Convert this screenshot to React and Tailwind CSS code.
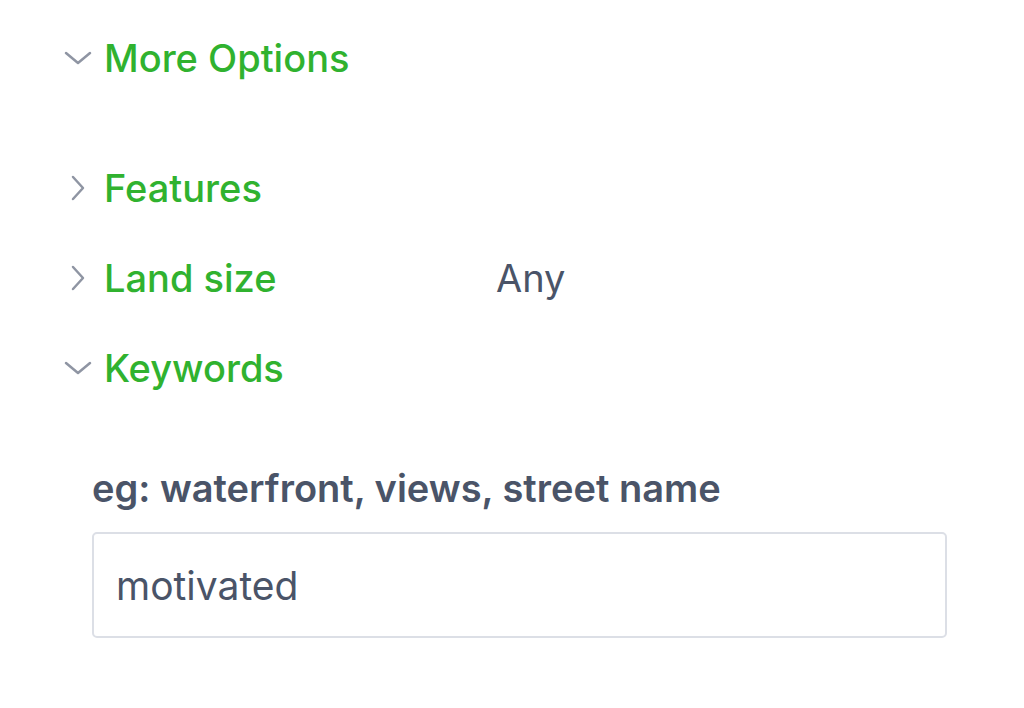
import { useState } from 'react';

const GREEN = 'text-[#30b22f]';

const ChevronDown = () => (
  <svg width="28" height="14" viewBox="0 0 28 14" fill="none" className="text-[#8f95a3]">
    <path d="M2 2l12 10L26 2" stroke="currentColor" strokeWidth="2.5" strokeLinecap="round" strokeLinejoin="round" />
  </svg>
);

const ChevronRight = () => (
  <svg width="16" height="26" viewBox="0 0 16 26" fill="none" className="text-[#8f95a3]">
    <path d="M3 2l10 11L3 24" stroke="currentColor" strokeWidth="2.5" strokeLinecap="round" strokeLinejoin="round" />
  </svg>
);

const Row = ({ open, label, value }) => (
  <div className="flex items-center h-[90px]">
    <div className={`w-[40px] flex items-center ${open ? 'justify-start' : 'justify-start pl-[6px]'}`}>
      {open ? <ChevronDown /> : <ChevronRight />}
    </div>
    <span className={`w-[392px] font-medium ${GREEN}`}>{label}</span>
    {value && <span className="text-[#4a5468]">{value}</span>}
  </div>
);

export default function App() {
  const [keywords, setKeywords] = useState('motivated');

  return (
    <div
      className="w-[1024px] h-[708px] bg-white pl-[64px] pt-[13px] text-[38px] leading-none"
      style={{ fontFamily: 'Inter, "Noto Sans", sans-serif' }}
    >
      <Row open label="More Options" />

      <div className="mt-[40px]">
        <Row label="Features" />
        <Row label="Land size" value="Any" />
        <Row open label="Keywords" />
      </div>

      {/* Keywords panel */}
      <div className="ml-[28px] mt-[55px] w-[855px]">
        <label className="block text-[38px] font-semibold text-[#4a5468] leading-[40px]">
          eg: waterfront, views, street name
        </label>
        <input
          value={keywords}
          onChange={(e) => setKeywords(e.target.value)}
          className="mt-[24px] w-full h-[106px] px-[22px] border-2 border-[#dcdfe6] rounded-[5px] text-[39px] text-[#4a5468] outline-none"
        />
      </div>
    </div>
  );
}
